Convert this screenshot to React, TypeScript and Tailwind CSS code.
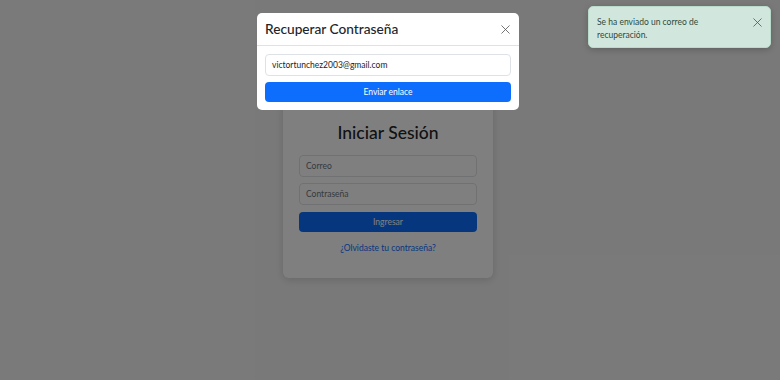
import { X } from "lucide-react";

export default function App() {
  return (
    <div
      className="relative h-[380px] w-[780px] overflow-hidden bg-[#f3f3f3] text-[#212529]"
      style={{ fontFamily: 'Lato, "Noto Sans", sans-serif' }}
    >
      {/* Login page */}
      <div className="flex h-full items-center justify-center pr-[4px]">
        <div className="mt-[-2px] flex h-[177px] w-[210px] flex-col items-center rounded-[6px] bg-white px-4 pt-[18px] shadow-[0_2px_8px_rgba(0,0,0,0.15)]">
          <h1 className="text-[17.5px] font-medium leading-[28px]">Iniciar Sesión</h1>
          <div className="mt-[8px] flex w-full flex-col gap-[6px]">
            <div className="flex h-[22px] items-center rounded-[4px] border border-[#dee2e6] px-[6px] pt-[2px] text-[8.5px] text-[#6c757d]">
              Correo
            </div>
            <div className="flex h-[22px] items-center rounded-[4px] border border-[#dee2e6] px-[6px] pt-[2px] text-[8.5px] text-[#6c757d]">
              Contraseña
            </div>
            <button className="mt-[1px] h-[20px] rounded-[4px] bg-[#0d6efd] pt-[1px] text-[8.5px] text-white">
              Ingresar
            </button>
          </div>
          <a className="mt-[10px] text-[8.5px] text-[#0d6efd]">¿Olvidaste tu contraseña?</a>
        </div>
      </div>

      {/* Backdrop */}
      <div className="absolute inset-0 bg-black/50" />

      {/* Modal */}
      <div className="absolute left-[257px] top-[13px] w-[262px] rounded-[5px] bg-white">
        <div className="flex h-[33px] items-center justify-between border-b border-[#dee2e6] pl-[8px] pr-[6px]">
          <span className="text-[13.7px] font-medium">Recuperar Contraseña</span>
          <X className="h-[15px] w-[15px] text-[#555]" strokeWidth={1.3} />
        </div>
        <div className="flex flex-col gap-[6px] px-[8px] pb-[8px] pt-[8px]">
          <div className="flex h-[22px] items-center rounded-[4px] border border-[#dee2e6] px-[6px] pt-[1px] text-[8.5px] text-[#212529]">
            victortunchez2003@gmail.com
          </div>
          <button className="h-[20px] rounded-[4px] bg-[#0d6efd] pt-[1px] text-[8.5px] text-white">Enviar enlace</button>
        </div>
      </div>

      {/* Toast */}
      <div className="absolute left-[588px] top-[6px] flex h-[42px] w-[183px] items-start justify-between rounded-[5px] border border-[#badbcc] bg-[#d1e7dd] pl-[8px] pr-[5px] pt-[9px] shadow-[0_2px_6px_rgba(0,0,0,0.2)]">
        <p className="text-[8.5px] leading-[13px] text-[#2d4a3c]">
          Se ha enviado un correo de
          <br />
          recuperación.
        </p>
        <X className="-mt-[1px] h-[15px] w-[15px] text-[#4a5a52]" strokeWidth={1.3} />
      </div>
    </div>
  );
}
